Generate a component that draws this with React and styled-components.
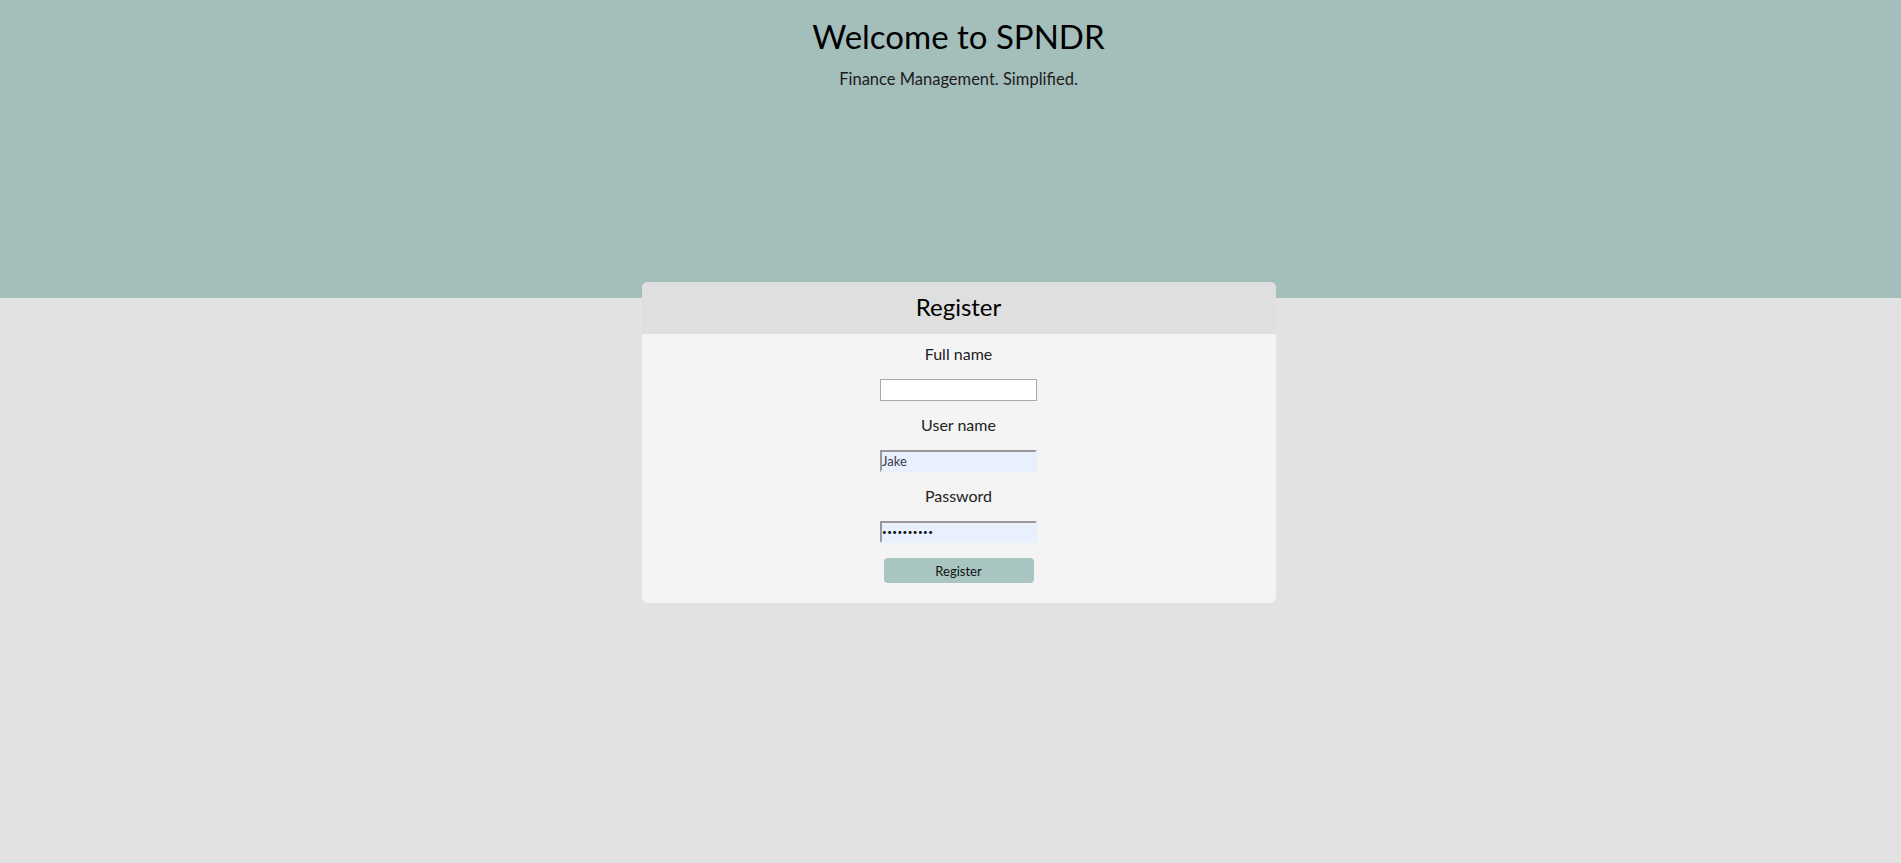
import React from 'react';
import styled, { createGlobalStyle } from 'styled-components';

const GlobalStyle = createGlobalStyle`
  html, body {
    margin: 0;
    padding: 0;
    background: #e2e2e2;
  }
  body {
    font-family: Lato, 'Open Sans', sans-serif;
    color: #111;
  }
`;

const Page = styled.div`
  min-height: 100vh;
  background: #e2e2e2;
`;

const Hero = styled.header`
  height: 298px;
  background: #a3bebb;
  display: flex;
  flex-direction: column;
  align-items: center;
  padding-left: 16px;
  box-sizing: border-box;
`;

const Title = styled.h1`
  margin: 16px 0 0;
  font-size: 33px;
  font-weight: 400;
  color: #000;
`;

const Tagline = styled.p`
  margin: 13px 0 0;
  font-size: 16.5px;
  color: #1c1c1c;
`;

const Main = styled.main`
  display: flex;
  justify-content: center;
  padding-left: 16px;
  margin-top: -16px;
`;

const Card = {
  Box: styled.section`
    width: 634px;
    border-radius: 6px;
    overflow: hidden;
    background: #f4f4f4;
  `,
  Head: styled.div`
    height: 52px;
    padding-bottom: 3px;
    box-sizing: border-box;
    background: #dfdfdf;
    display: flex;
    align-items: center;
    justify-content: center;
  `,
  Title: styled.h2`
    margin: 0;
    font-size: 24px;
    font-weight: 400;
    color: #000;
  `,
  Body: styled.form`
    display: flex;
    flex-direction: column;
    align-items: center;
    padding: 10px 0 20px;
  `
};

const Field = styled.div`
  display: flex;
  flex-direction: column;
  align-items: center;
  margin-bottom: 14px;
`;

const Label = styled.label`
  font-size: 16px;
  line-height: 19px;
  color: #222;
  margin-bottom: 16px;
`;

const Input = styled.input`
  box-sizing: border-box;
  width: 157px;
  height: 22px;
  margin: 0;
  padding: 1px 2px;
  font-family: Lato, sans-serif;
  font-size: 13px;
  color: #3a3a48;
  outline: none;
  border-radius: 0;
  background: ${p => (p.$filled ? '#e8f0fe' : '#fff')};
  border: ${p => (p.$filled ? '2px solid #e8f0fe' : '1px solid #a9a9a9')};
  ${p =>
    p.$filled &&
    `
    border-top-color: #999;
    border-left-color: #999;
    padding-left: 0;
  `}
  &[type='password'] {
    font-size: 8px;
    letter-spacing: 0.5px;
    color: #111;
  }
`;

const Button = styled.button`
  width: 150px;
  height: 25px;
  margin-top: 1px;
  border: none;
  border-radius: 4px;
  background: #a9c5c1;
  font-family: Lato, sans-serif;
  font-size: 13px;
  color: #111;
  cursor: pointer;
`;

export default function App() {
  return (
    <Page>
      <GlobalStyle />
      <Hero>
        <Title>Welcome to SPNDR</Title>
        <Tagline>Finance Management. Simplified.</Tagline>
      </Hero>
      <Main>
        <Card.Box>
          <Card.Head>
            <Card.Title>Register</Card.Title>
          </Card.Head>
          <Card.Body onSubmit={e => e.preventDefault()}>
            <Field>
              <Label htmlFor="fullname">Full name</Label>
              <Input id="fullname" type="text" />
            </Field>
            <Field>
              <Label htmlFor="username">User name</Label>
              <Input id="username" type="text" $filled defaultValue="Jake" />
            </Field>
            <Field>
              <Label htmlFor="password">Password</Label>
              <Input id="password" type="password" $filled defaultValue="0123456789" />
            </Field>
            <Button type="submit">Register</Button>
          </Card.Body>
        </Card.Box>
      </Main>
    </Page>
  );
}
